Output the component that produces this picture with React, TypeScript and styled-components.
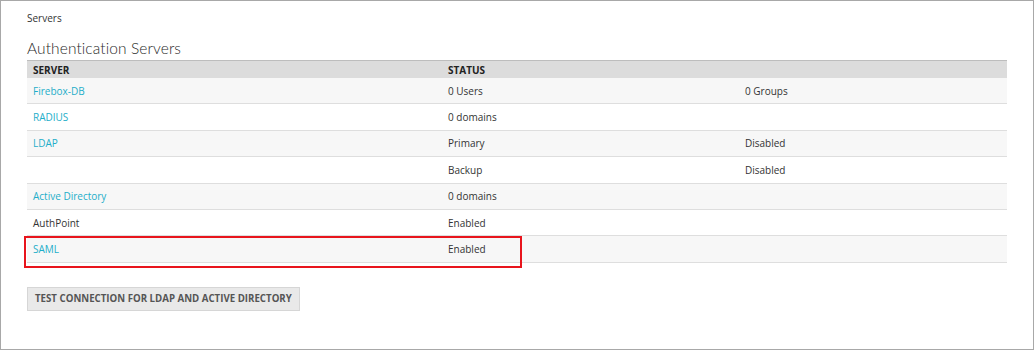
import styled, { createGlobalStyle } from "styled-components"

const GlobalStyle = createGlobalStyle`
  html, body {
    margin: 0;
    padding: 0;
    background: #fff;
  }
  body {
    font-family: "Open Sans", "Liberation Sans", sans-serif;
    color: #333;
  }
`

type Row = {
  server: string
  link: boolean
  status: string
  extra?: string
}

const rows: Row[] = [
  { server: "Firebox-DB", link: true, status: "0 Users", extra: "0 Groups" },
  { server: "RADIUS", link: true, status: "0 domains" },
  { server: "LDAP", link: true, status: "Primary", extra: "Disabled" },
  { server: "", link: false, status: "Backup", extra: "Disabled" },
  { server: "Active Directory", link: true, status: "0 domains" },
  { server: "AuthPoint", link: false, status: "Enabled" },
  { server: "SAML", link: true, status: "Enabled" },
]

const App = () => {
  return (
    <>
      <GlobalStyle />
      <Frame>
        <Crumb>Servers</Crumb>
        <Title>Authentication Servers</Title>
        <TableWrap>
          <Table>
            <thead>
              <tr>
                <Th $width={403}>SERVER</Th>
                <Th $width={285}>STATUS</Th>
                <Th />
              </tr>
            </thead>
            <tbody>
              {rows.map((row, i) => (
                <Tr key={i} $odd={i % 2 === 0}>
                  <Td>{row.link ? <ServerLink>{row.server}</ServerLink> : row.server}</Td>
                  <Td>{row.status}</Td>
                  <Td>{row.extra}</Td>
                </Tr>
              ))}
            </tbody>
          </Table>
          {/* red callout round the SAML row */}
          <Highlight />
        </TableWrap>
        <TestButton>TEST CONNECTION FOR LDAP AND ACTIVE DIRECTORY</TestButton>
      </Frame>
    </>
  )
}

export default App

const Frame = styled.div`
  box-sizing: border-box;
  width: 1034px;
  height: 350px;
  border: 1px solid #a8a8a8;
  padding: 9px 26px 0;
  display: flex;
  flex-direction: column;
  align-items: flex-start;
`

const Crumb = styled.div`
  font-size: 10px;
  line-height: 16px;
  color: #333;
`

const Title = styled.h2`
  margin: 11px 0 0;
  font-family: "Lato", "Open Sans", sans-serif;
  font-weight: 300;
  font-size: 15.5px;
  line-height: 22px;
  color: #2a2a2a;
  letter-spacing: 0.1px;
`

const TableWrap = styled.div`
  position: relative;
  width: 980px;
  margin-top: 1px;
`

const Table = styled.table`
  width: 100%;
  border-collapse: collapse;
  table-layout: fixed;
  font-size: 10px;
`

const Th = styled.th<{ $width?: number }>`
  width: ${(p) => (p.$width ? `${p.$width}px` : "auto")};
  height: 17px;
  padding: 0 6px;
  text-align: left;
  font-weight: 700;
  font-size: 10px;
  color: #222;
  background: #dcdcdc;
  border-top: 1px solid #bdbdbd;
`

const Tr = styled.tr<{ $odd: boolean }>`
  background: ${(p) => (p.$odd ? "#f7f7f7" : "#fff")};
  border-bottom: 1px solid #dedede;
`

const Td = styled.td`
  height: 25.4px;
  padding: 0 6px;
  color: #333;
  font-size: 10px;
  white-space: nowrap;
`

const ServerLink = styled.span`
  color: #1eaec9;
  cursor: pointer;
`

const Highlight = styled.div`
  position: absolute;
  left: -3px;
  top: 176px;
  width: 494px;
  height: 28px;
  border: 2px solid #e8141c;
  pointer-events: none;
`

const TestButton = styled.button`
  margin-top: 24px;
  height: 24px;
  padding: 0 7px;
  background: #e9e9e9;
  border: 1px solid #d6d6d6;
  font-family: "Open Sans", "Liberation Sans", sans-serif;
  font-size: 9.7px;
  font-weight: 700;
  color: #555;
  cursor: pointer;
`
